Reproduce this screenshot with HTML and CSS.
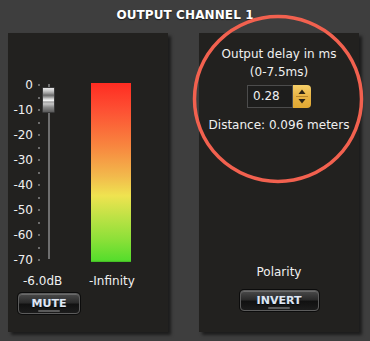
FILE: index.html
```html
<!DOCTYPE html>
<html>
<head>
<meta charset="utf-8">
<link rel="stylesheet" href="styles.css">
</head>
<body>
<div class="page">
  <h1 class="title">OUTPUT CHANNEL 1</h1>
  <div class="panels">
    <section class="panel panel-left">
      <div class="strip">
        <div class="scale">
          <div class="mark"><span class="lbl">0</span><span class="ticks"><i></i><i></i></span></div>
          <div class="mark"><span class="lbl">-10</span><span class="ticks"><i></i><i></i></span></div>
          <div class="mark"><span class="lbl">-20</span><span class="ticks"><i></i><i></i></span></div>
          <div class="mark"><span class="lbl">-30</span><span class="ticks"><i></i><i></i></span></div>
          <div class="mark"><span class="lbl">-40</span><span class="ticks"><i></i><i></i></span></div>
          <div class="mark"><span class="lbl">-50</span><span class="ticks"><i></i><i></i></span></div>
          <div class="mark"><span class="lbl">-60</span><span class="ticks"><i></i><i></i></span></div>
          <div class="mark"><span class="lbl">-70</span><span class="ticks"><i></i></span></div>
        </div>
        <div class="fader">
          <div class="track"></div>
          <div class="knob"></div>
        </div>
        <div class="meter"></div>
      </div>
      <div class="readouts">
        <span class="gain">-6.0dB</span>
        <span class="level">-Infinity</span>
      </div>
      <button class="btn btn-mute">MUTE</button>
    </section>
    <section class="panel panel-right">
      <p class="delay-label">Output delay in ms<br>(0-7.5ms)</p>
      <div class="spin">
        <span class="spin-field">0.28</span>
        <span class="spin-btns">
          <svg width="18" height="23" viewBox="0 0 18 23">
            <path d="M5.5 9 L9 4.5 L12.5 9 Z" fill="#2a2214"/>
            <line x1="3" y1="11.5" x2="15" y2="11.5" stroke="#b8862a" stroke-width="1"/>
            <path d="M5.5 14 L9 18.5 L12.5 14 Z" fill="#2a2214"/>
          </svg>
        </span>
      </div>
      <p class="distance">Distance: 0.096 meters</p>
      <div class="spacer"></div>
      <p class="polarity">Polarity</p>
      <button class="btn btn-invert">INVERT</button>
    </section>
  </div>
  <svg class="highlight" width="180" height="180" viewBox="0 0 180 180">
    <ellipse cx="90" cy="90" rx="83.5" ry="82.5" fill="none" stroke="#f2614f" stroke-width="3.5"/>
  </svg>
</div>
</body>
</html>
```
FILE: styles.css
```css
html, body {
  margin: 0;
  padding: 0;
}
body {
  background: #3e3e3e;
  font-family: "DejaVu Sans", Verdana, sans-serif;
  color: #f0f0f0;
  width: 370px;
  height: 341px;
  overflow: hidden;
}
.page {
  position: relative;
  width: 370px;
  height: 341px;
}
.title {
  margin: 0;
  height: 33px;
  box-sizing: border-box;
  padding-top: 7px;
  text-align: center;
  font-size: 12px;
  font-weight: bold;
  color: #ffffff;
  letter-spacing: 0.1px;
  text-shadow: 0 1px 1px rgba(0,0,0,0.6);
  line-height: 16px;
}
.panels {
  display: flex;
  gap: 31px;
  padding-left: 8px;
}
.panel {
  width: 160px;
  height: 299px;
  background: #22211f;
  box-shadow: 3px 3px 3px rgba(0,0,0,0.55);
  box-sizing: border-box;
  display: flex;
  flex-direction: column;
}
.panel-left {
  padding-top: 50px;
}
.strip {
  display: flex;
  height: 179px;
}
.scale {
  width: 33px;
  flex-shrink: 0;
  display: flex;
  flex-direction: column;
  padding-top: 2px;
}
.mark {
  height: 25px;
  flex-shrink: 0;
  display: flex;
  font-size: 12px;
  line-height: 0;
}
.lbl {
  width: 25px;
  text-align: right;
  height: 0;
  line-height: 0;
}
.ticks {
  display: flex;
  flex-direction: column;
  margin-left: 5px;
  gap: 10.5px;
  margin-top: -1px;
}
.ticks i {
  display: block;
  width: 2px;
  height: 2px;
  background: #6c6c6c;
}
.fader {
  position: relative;
  width: 20px;
  flex-shrink: 0;
}
.track {
  width: 2px;
  margin-left: 7px;
  height: 175px;
  margin-top: 1px;
  background: #6e6e6e;
}
.knob {
  position: absolute;
  left: 1px;
  top: 4px;
  width: 11px;
  height: 24px;
  border: 1px solid #3a3a3a;
  border-radius: 1px;
  background: linear-gradient(to bottom,
    #e8e8e8 0%, #c8c8c8 12%, #9a9a9a 22%, #6a6a6a 30%, #9a9a9a 38%,
    #d8d8d8 46%, #f4f4f4 52%, #a0a0a0 58%, #c6c6c6 66%, #8a8a8a 80%, #5a5a5a 100%);
}
.meter {
  width: 40px;
  height: 179px;
  flex-shrink: 0;
  margin-left: 30px;
  background: linear-gradient(to bottom,
    #ff2c22 0%, #fd5033 15%, #f8853f 35%, #f2b94c 52%, #efe350 63%, #bde245 75%, #8ee039 87%, #56dd2c 99%, #3fb522 100%);
}
.readouts {
  display: flex;
  margin-top: 12px;
  font-size: 12px;
  line-height: 14px;
  height: 14px;
}
.gain {
  width: 70px;
  padding-left: 15px;
  box-sizing: border-box;
}
.level {
  padding-left: 11px;
}
.btn {
  display: block;
  margin: 0;
  padding: 0;
  height: 21px;
  border: 1px solid #5c5c5c;
  border-radius: 4px;
  background: linear-gradient(to bottom, #4a4a4a 0%, #2a2a2a 45%, #111 55%, #1c1c1c 100%);
  box-shadow: inset 0 1px 0 rgba(255,255,255,0.18), 0 0 0 1px #0c0c0c;
  font-family: "DejaVu Sans", Verdana, sans-serif;
  font-weight: bold;
  font-size: 11px;
  color: #dfe6f2;
  text-shadow: 0 1px 1px #000, 0 0 1px #6b86b0;
  line-height: 17px;
  position: relative;
  box-sizing: border-box;
}
.btn::after {
  content: "";
  position: absolute;
  left: 50%;
  bottom: 1px;
  width: 22px;
  margin-left: -11px;
  height: 2px;
  border-radius: 2px;
  background: #5a5a5a;
}
.btn-mute {
  width: 62px;
  margin-left: 10px;
  margin-top: 5px;
}
.panel-right {
  align-items: center;
  padding-top: 12px;
  padding-bottom: 21px;
}
.delay-label {
  margin: 0;
  text-align: center;
  font-size: 12px;
  line-height: 18px;
}
.spin {
  display: flex;
  margin-top: 4px;
  height: 23px;
}
.spin-field {
  width: 46px;
  height: 23px;
  box-sizing: border-box;
  border: 1px solid #4c4c4c;
  background: #1d1d1c;
  font-size: 12px;
  line-height: 21px;
  padding-left: 5px;
}
.spin-btns {
  width: 18px;
  height: 23px;
  border-radius: 0 4px 4px 0;
  background: linear-gradient(to bottom, #f5ce68 0%, #e9b445 50%, #e0a832 100%);
  display: block;
}
.spin-btns svg {
  display: block;
}
.distance {
  margin: 9px 0 0;
  font-size: 12px;
  line-height: 16px;
  white-space: nowrap;
}
.spacer {
  flex: 1;
}
.polarity {
  margin: 0;
  font-size: 12px;
  line-height: 16px;
}
.btn-invert {
  width: 79px;
  margin-top: 10px;
}
.highlight {
  position: absolute;
  left: 188px;
  top: 9px;
  pointer-events: none;
}
```
